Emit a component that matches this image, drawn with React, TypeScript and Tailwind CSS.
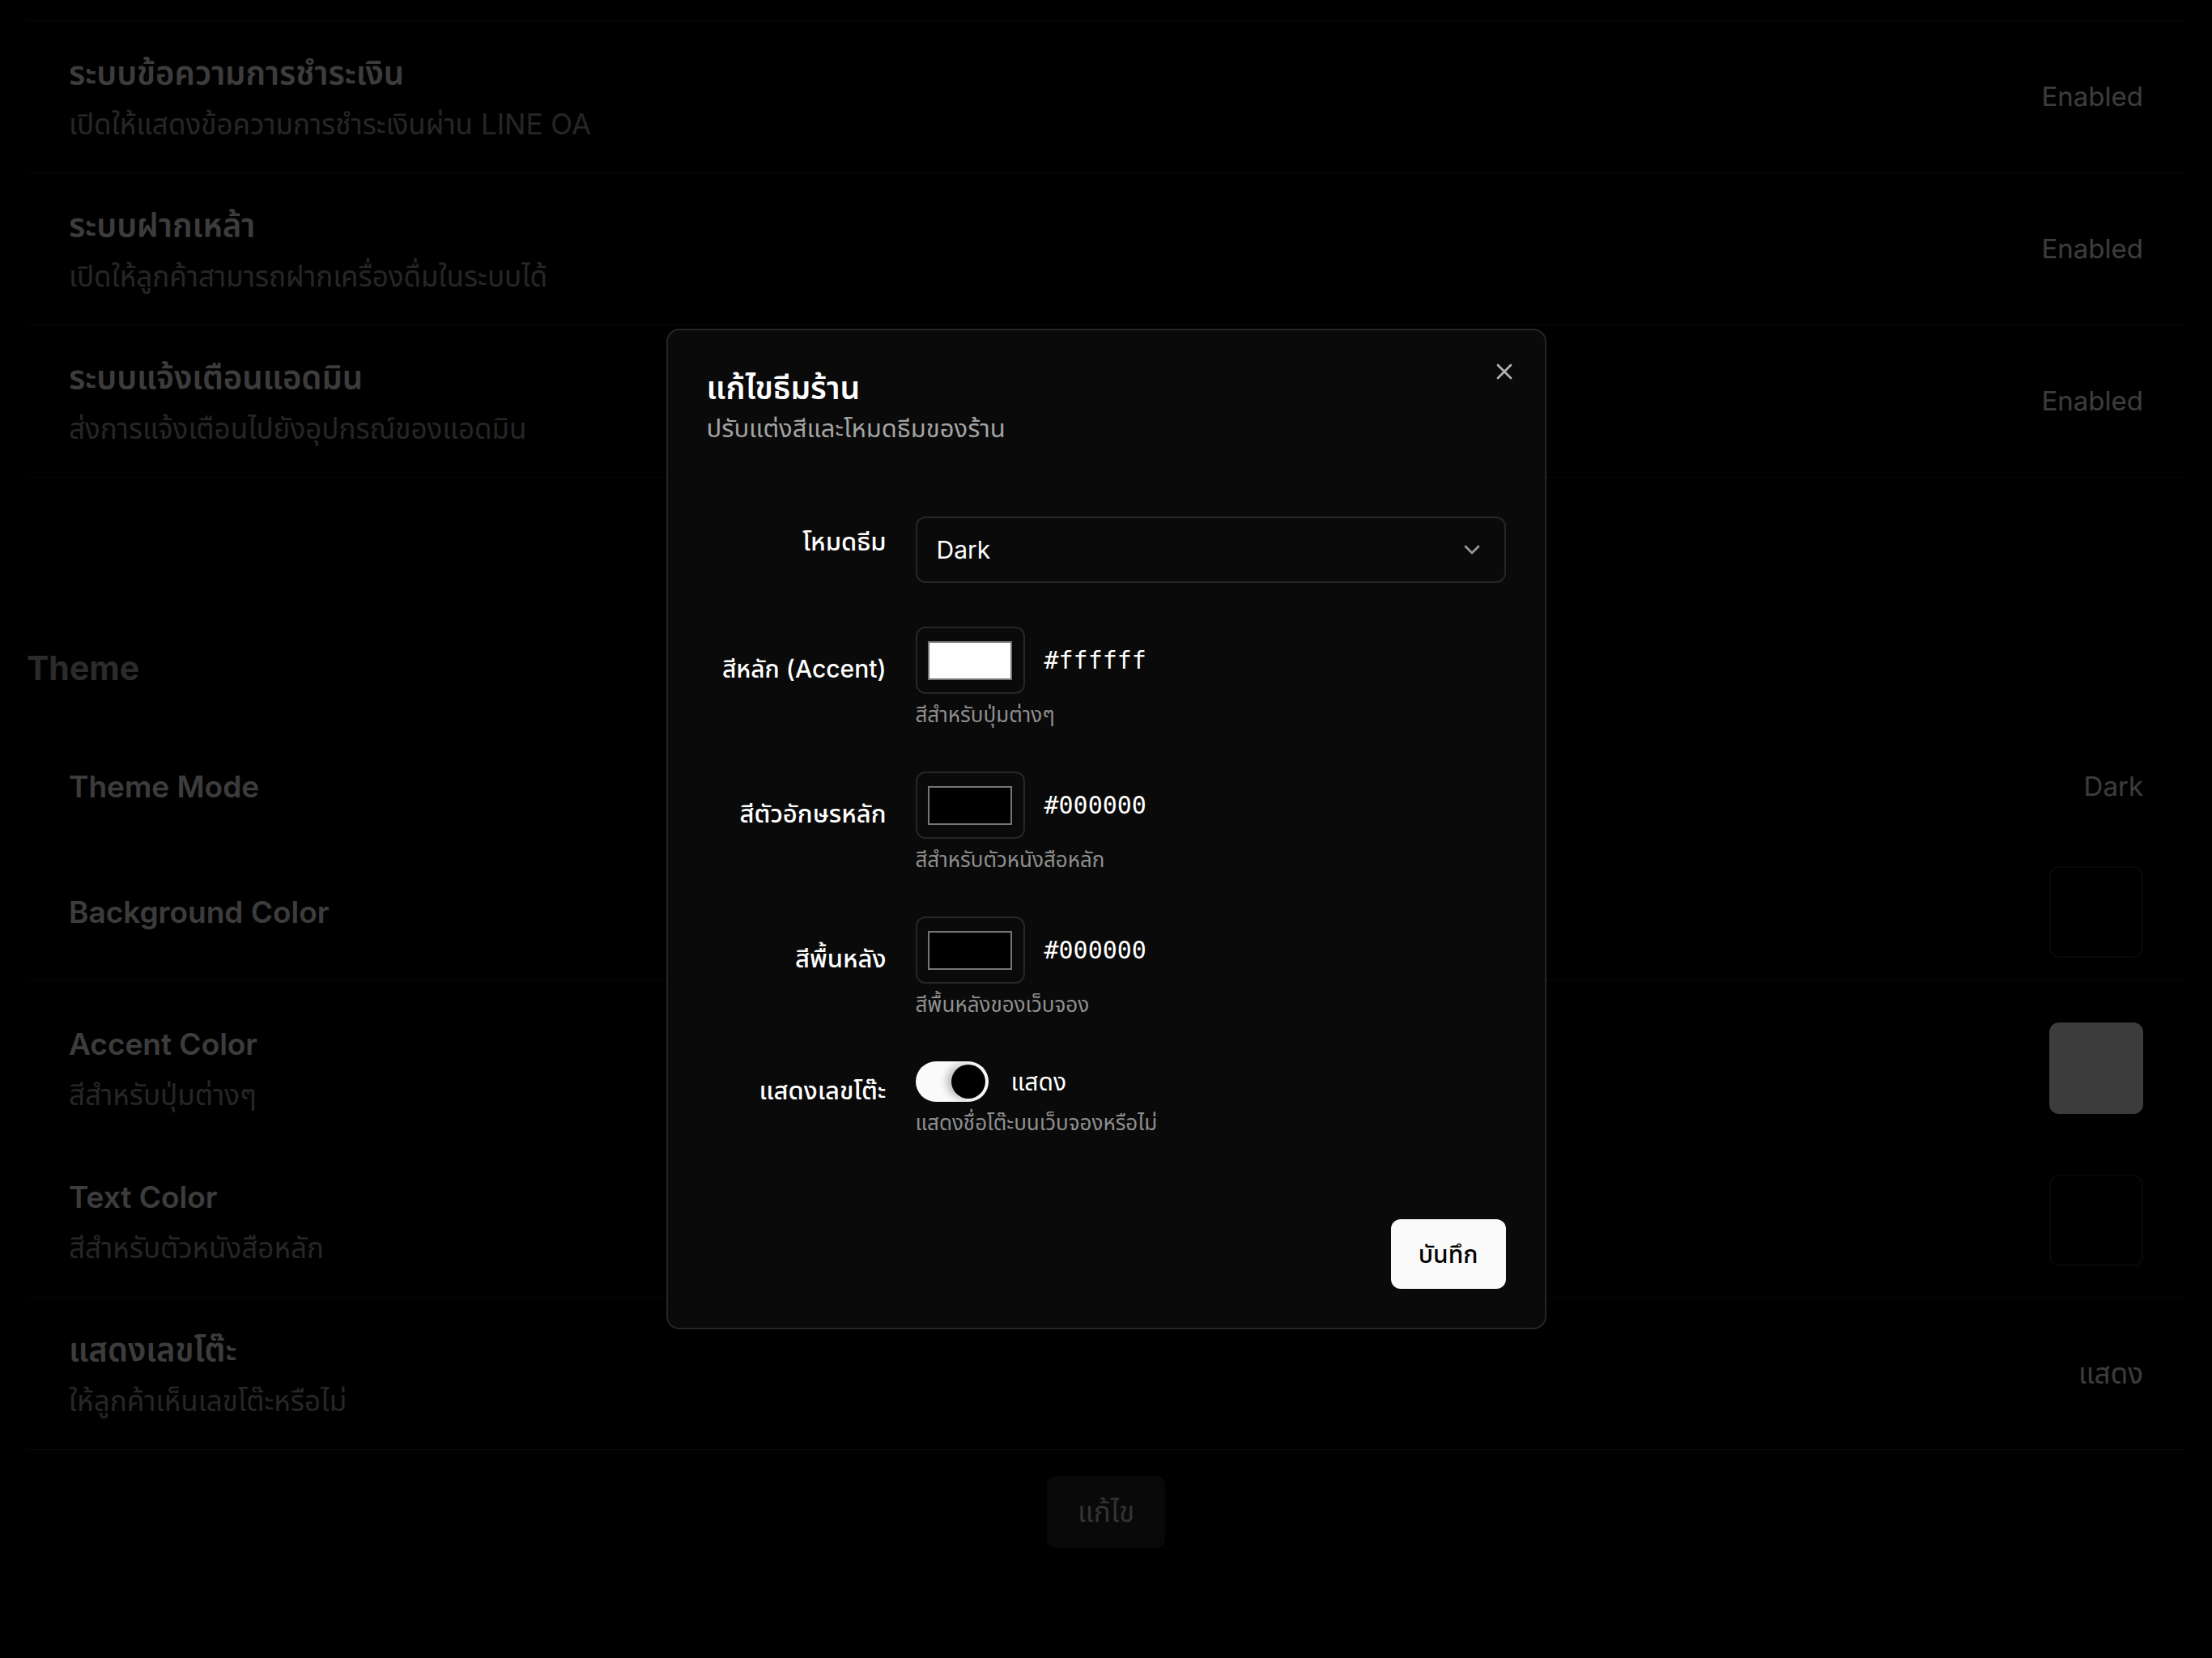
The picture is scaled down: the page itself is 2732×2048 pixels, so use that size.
import { X, ChevronDown } from 'lucide-react';

interface SettingRow {
  title: string;
  desc: string;
  value: string;
}

const systemRows: SettingRow[] = [
  { title: 'ระบบข้อความการชำระเงิน', desc: 'เปิดให้แสดงข้อความการชำระเงินผ่าน LINE OA', value: 'Enabled' },
  { title: 'ระบบฝากเหล้า', desc: 'เปิดให้ลูกค้าสามารถฝากเครื่องดื่มในระบบได้', value: 'Enabled' },
  { title: 'ระบบแจ้งเตือนแอดมิน', desc: 'ส่งการแจ้งเตือนไปยังอุปกรณ์ของแอดมิน', value: 'Enabled' },
];

function ColorField({ value, swatch, hint }: { value: string; swatch: string; hint: string }) {
  return (
    <div>
      <div className="flex items-center gap-[24px]">
        <div className="flex h-[83px] w-[135px] items-center justify-center rounded-[12px] border-2 border-[#262626]">
          <div className={`h-[48px] w-[104px] border-2 border-[#767676] ${swatch}`} />
        </div>
        <span className="font-['DejaVu_Sans_Mono',monospace] text-[30px]">{value}</span>
      </div>
      <p className="mt-[10px] text-[26px] leading-[32px] text-[#8f8f8f]">{hint}</p>
    </div>
  );
}

export default function App() {
  return (
    <div className="min-h-screen bg-black px-[33px] pt-[25px] font-['Inter','Noto_Sans_Thai','Noto_Sans',sans-serif] text-white">
      {/* System settings */}
      <div className="border-t border-[#222]">
        {systemRows.map((row) => (
          <div key={row.title} className="flex h-[188px] items-center justify-between border-b border-[#222] px-[52px]">
            <div>
              <h3 className="text-[40px] font-semibold leading-[56px]">{row.title}</h3>
              <p className="mt-[10px] text-[35px] leading-[48px] text-[#a3a3a3]">{row.desc}</p>
            </div>
            <span className="text-[33px]">{row.value}</span>
          </div>
        ))}
      </div>

      {/* Theme */}
      <h2 className="mt-[207px] text-[41px] font-bold leading-[56px] text-[#b5b5b5]">Theme</h2>
      <div className="mt-[48px]">
        <div className="flex h-[142px] items-center justify-between px-[52px]">
          <h3 className="text-[37px] font-semibold leading-[56px]">Theme Mode</h3>
          <span className="text-[33px]">Dark</span>
        </div>
        <div className="flex h-[168px] items-center justify-between border-b border-[#222] px-[52px]">
          <h3 className="text-[37px] font-semibold leading-[56px]">Background Color</h3>
          <div className="h-[113px] w-[116px] rounded-[12px] border-2 border-[#262626] bg-black" />
        </div>
        <div className="flex h-[202px] items-center justify-between px-[52px] pt-[14px]">
          <div>
            <h3 className="text-[37px] font-semibold leading-[56px]">Accent Color</h3>
            <p className="mt-[10px] text-[35px] leading-[48px] text-[#a3a3a3]">สีสำหรับปุ่มต่างๆ</p>
          </div>
          <div className="h-[113px] w-[116px] rounded-[12px] bg-white" />
        </div>
        <div className="flex h-[190px] items-center justify-between border-b border-[#222] px-[52px]">
          <div>
            <h3 className="text-[37px] font-semibold leading-[56px]">Text Color</h3>
            <p className="mt-[10px] text-[35px] leading-[48px] text-[#a3a3a3]">สีสำหรับตัวหนังสือหลัก</p>
          </div>
          <div className="h-[113px] w-[116px] rounded-[12px] border-2 border-[#262626] bg-black" />
        </div>
        <div className="flex h-[188px] items-center justify-between border-b border-[#222] px-[52px]">
          <div>
            <h3 className="text-[40px] font-semibold leading-[56px]">แสดงเลขโต๊ะ</h3>
            <p className="mt-[10px] text-[35px] leading-[48px] text-[#a3a3a3]">ให้ลูกค้าเห็นเลขโต๊ะหรือไม่</p>
          </div>
          <span className="text-[35px]">แสดง</span>
        </div>
      </div>
      <div className="mt-[32px] flex justify-center">
        <button className="h-[89px] w-[146px] rounded-[12px] bg-[#262626] text-[35px] text-[#d4d4d4]">แก้ไข</button>
      </div>

      {/* Overlay */}
      <div className="fixed inset-0 bg-black/[0.765]" />

      {/* Dialog */}
      <div className="fixed inset-0 flex items-center justify-center">
        <div className="relative w-[1087px] rounded-[16px] border-2 border-[#262626] bg-[#0a0a0a] px-[48px] pb-[48px] pt-[43px]">
          <button className="absolute right-[34px] top-[35px] text-[#b3b3b3]">
            <X size={32} strokeWidth={2} />
          </button>

          <h2 className="text-[39px] font-semibold leading-[56px]">แก้ไขธีมร้าน</h2>
          <p className="mt-[2px] text-[31px] leading-[40px] text-[#a3a3a3]">ปรับแต่งสีและโหมดธีมของร้าน</p>

          <div className="mt-[89px] grid grid-cols-[222px_1fr] items-center gap-x-[36px] gap-y-[54px]">
            <label className="pb-[20px] text-right text-[31px] font-medium">โหมดธีม</label>
            <div className="flex h-[82px] items-center justify-between rounded-[12px] border-2 border-[#262626] px-[24px]">
              <span className="text-[30px]">Dark</span>
              <ChevronDown size={32} className="text-[#9a9a9a]" />
            </div>

            <label className="pb-[20px] text-right text-[30px] font-medium">สีหลัก (Accent)</label>
            <ColorField value="#ffffff" swatch="bg-white" hint="สีสำหรับปุ่มต่างๆ" />

            <label className="pb-[20px] text-right text-[31px] font-medium">สีตัวอักษรหลัก</label>
            <ColorField value="#000000" swatch="bg-black" hint="สีสำหรับตัวหนังสือหลัก" />

            <label className="pb-[20px] text-right text-[31px] font-medium">สีพื้นหลัง</label>
            <ColorField value="#000000" swatch="bg-black" hint="สีพื้นหลังของเว็บจอง" />

            <label className="pb-[20px] text-right text-[31px] font-medium">แสดงเลขโต๊ะ</label>
            <div>
              <div className="flex items-center gap-[28px]">
                <div className="flex h-[50px] w-[90px] items-center justify-end rounded-full bg-[#fafafa] p-[4px]">
                  <div className="h-[42px] w-[42px] rounded-full bg-black shadow-[-6px_0_10px_rgba(0,0,0,0.25)]" />
                </div>
                <span className="text-[30px]">แสดง</span>
              </div>
              <p className="mt-[10px] text-[26px] leading-[32px] text-[#8f8f8f]">แสดงชื่อโต๊ะบนเว็บจองหรือไม่</p>
            </div>
          </div>

          <div className="mt-[103px] flex justify-end">
            <button className="h-[86px] rounded-[12px] bg-[#fafafa] px-[34px] text-[30px] font-medium text-black">บันทึก</button>
          </div>
        </div>
      </div>
    </div>
  );
}
